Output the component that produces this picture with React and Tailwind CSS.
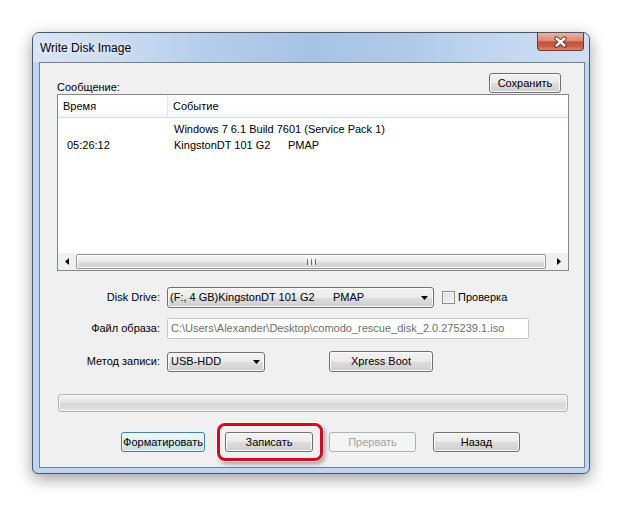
import React from "react";

const BTN =
  "h-[20px] rounded-[3px] border border-[#707070] bg-[linear-gradient(to_bottom,#f2f2f2_0%,#ebebeb_50%,#dddddd_51%,#cfcfcf_100%)] shadow-[inset_0_0_0_1px_#fbfbfb] flex items-center justify-center text-black";

function DownArrow() {
  return (
    <svg width="7" height="4" viewBox="0 0 7 4">
      <path d="M0 0H7L3.5 4Z" fill="#000" />
    </svg>
  );
}

function CloseX() {
  return (
    <svg width="15" height="12" viewBox="0 0 15 12">
      <path d="M3.5 2.5L11.5 9.5M11.5 2.5L3.5 9.5" stroke="#5a2a22" strokeWidth="4.2" strokeLinecap="round" />
      <path d="M3.5 2.5L11.5 9.5M11.5 2.5L3.5 9.5" stroke="#ffffff" strokeWidth="2.4" strokeLinecap="round" />
    </svg>
  );
}

export default function App() {
  return (
    <div className="w-[623px] h-[507px] bg-white pt-[32px] pl-[32px] font-['Liberation_Sans',Arial,sans-serif] text-[11px] text-black">
      <div className="w-[558px] h-[442px] rounded-t-[7px] rounded-b-[6px] border border-[#4b5666] bg-[#bed6ef] shadow-[0_5px_16px_rgba(0,0,0,0.38)] flex flex-col">
        {/* title bar */}
        <div className="h-[29px] flex rounded-t-[6px] bg-[linear-gradient(to_right,#d7e6f5_0%,#cbdcf0_15%,#b4cdea_32%,#a7c3e4_50%,#b0cbe8_68%,#c3d8ef_85%,#cde0f3_100%)]">
          <div className="pl-[7px] flex items-center text-[12px] text-black [text-shadow:0_0_6px_#ffffff]">
            Write Disk Image
          </div>
          <div className="ml-auto mr-[5px] w-[47px] h-[18px] rounded-b-[4px] border border-t-0 border-[#7a3326] bg-[linear-gradient(to_bottom,#eab2a4_0%,#dd8a77_45%,#c6503a_52%,#c85c45_78%,#d98a6f_100%)] flex items-center justify-center">
            <CloseX />
          </div>
        </div>

        {/* sides */}
        <div className="flex-1 pl-[6px] pr-[4px] pb-[5px] flex">
          {/* client area */}
          <div className="flex-1 border border-[#74808e] bg-[#f0f0f0] pl-[17px] pt-[10px] flex flex-col">
            {/* top row */}
            <div className="w-[512px] h-[20px] flex items-end justify-between">
              <span className="leading-[13px] translate-y-[1px]">Сообщение:</span>
              <div className={BTN + " w-[72px] mr-[8px]"}>Сохранить</div>
            </div>

            {/* list */}
            <div className="mt-[1px] w-[512px] h-[177px] border border-[#828790] bg-white flex flex-col">
              <div className="h-[23px] flex border-b border-[#d9dce0] bg-[linear-gradient(to_bottom,#ffffff,#ffffff_60%,#f5f6f7)]">
                <div className="w-[110px] pl-[5px] pt-[1px] flex items-center border-r border-[#e3e5e8]">Время</div>
                <div className="pl-[5px] pt-[1px] flex items-center">Событие</div>
              </div>
              <div className="flex-1 pt-[3px]">
                <div className="h-[16px] flex items-center">
                  <div className="w-[110px]" />
                  <div className="pl-[6px]">Windows 7 6.1 Build 7601 (Service Pack 1)</div>
                </div>
                <div className="h-[16px] flex items-center">
                  <div className="w-[110px] pl-[9px]">05:26:12</div>
                  <div className="pl-[6px] flex">
                    <span className="inline-block w-[114px]">KingstonDT 101 G2</span>
                    <span>PMAP</span>
                  </div>
                </div>
              </div>
              {/* horizontal scrollbar */}
              <div className="h-[17px] flex items-center bg-[#f0f0f0]">
                <div className="w-[18px] h-full flex items-center justify-center">
                  <svg width="4" height="7" viewBox="0 0 4 7">
                    <path d="M4 0V7L0 3.5Z" fill="#000" />
                  </svg>
                </div>
                <div className="w-[470px] h-[15px] rounded-[2px] border border-[#979797] bg-[linear-gradient(to_bottom,#f6f6f6_0%,#ececec_50%,#dcdcdc_51%,#d3d3d3_100%)] shadow-[inset_0_0_0_1px_#fafafa] flex items-center justify-center gap-[1px]">
                  <div className="w-[1px] h-[6px] bg-[#6f6f6f]" />
                  <div className="w-[1px] h-[6px] bg-white" />
                  <div className="w-[1px] h-[6px] bg-[#6f6f6f]" />
                  <div className="w-[1px] h-[6px] bg-white" />
                  <div className="w-[1px] h-[6px] bg-[#6f6f6f]" />
                </div>
                <div className="flex-1" />
                <div className="w-[18px] h-full flex items-center justify-center">
                  <svg width="4" height="7" viewBox="0 0 4 7">
                    <path d="M0 0V7L4 3.5Z" fill="#000" />
                  </svg>
                </div>
              </div>
            </div>

            {/* Disk Drive */}
            <div className="mt-[16px] flex items-center">
              <div className="w-[103px] text-right">Disk Drive:</div>
              <div className={BTN + " ml-[7px] w-[267px] h-[21px] !justify-start pl-[2px] pr-[5px]"}>
                <span className="inline-block w-[163px] whitespace-nowrap">(F:, 4 GB)KingstonDT 101 G2</span>
                <span>PMAP</span>
                <span className="ml-auto flex"><DownArrow /></span>
              </div>
              <div className="ml-[8px] w-[13px] h-[13px] border border-[#8e8f8f] bg-[linear-gradient(135deg,#dcdcdc,#f6f6f6)] shadow-[inset_0_0_0_1px_#f4f4f4]" />
              <span className="ml-[3px]">Проверка</span>
            </div>

            {/* Файл образа */}
            <div className="mt-[10px] flex items-center">
              <div className="w-[103px] text-right">Файл образа:</div>
              <div className="ml-[7px] w-[362px] h-[21px] rounded-[2px] border border-[#c2c6cc] bg-white pl-[3px] flex items-center text-[#6d6d6d] whitespace-nowrap">
                C:\Users\Alexander\Desktop\comodo_rescue_disk_2.0.275239.1.iso
              </div>
            </div>

            {/* Метод записи */}
            <div className="mt-[12px] flex items-center">
              <div className="w-[103px] text-right">Метод записи:</div>
              <div className={BTN + " ml-[7px] w-[98px] h-[20px] !justify-start pl-[3px] pr-[4px]"}>
                <span>USB-HDD</span>
                <span className="ml-auto flex"><DownArrow /></span>
              </div>
              <div className={BTN + " ml-[64px] w-[104px] h-[21px]"}>Xpress Boot</div>
            </div>

            {/* progress */}
            <div className="mt-[22px] ml-[1px] w-[510px] h-[18px] rounded-[3px] border border-[#b3b3b3] bg-[linear-gradient(to_bottom,#f3f3f3_0%,#e4e4e4_45%,#d6d6d6_55%,#e2e2e2_100%)] shadow-[inset_0_0_0_1px_#f7f7f7]" />

            {/* buttons */}
            <div className="mt-[20px] flex">
              <div className="ml-[64px] w-[84px] h-[20px] rounded-[3px] border border-[#3c7fb1] bg-[linear-gradient(to_bottom,#eef6fc_0%,#e2eef8_50%,#d3e6f4_51%,#c8deef_100%)] shadow-[inset_0_0_0_1px_#f8fbfe] flex items-center justify-center whitespace-nowrap">
                Форматировать
              </div>
              <div className="relative ml-[20px]">
                <div className={BTN + " w-[88px]"}>Записать</div>
                <div className="absolute left-[-8px] top-[-9px] right-[-10px] bottom-[-9px] rounded-[8px] border-[3px] border-[#e2001a] shadow-[0_0_0_1px_#ffffff,inset_0_0_0_1px_#ffffff,2px_3px_4px_rgba(0,0,0,0.35)]" />
              </div>
              <div className="ml-[16px] w-[87px] h-[20px] rounded-[3px] border border-[#adb2b5] bg-[#f4f4f4] flex items-center justify-center text-[#a3a3a3]">
                Прервать
              </div>
              <div className={BTN + " ml-[17px] w-[87px]"}>Назад</div>
            </div>
          </div>
        </div>
      </div>
    </div>
  );
}
